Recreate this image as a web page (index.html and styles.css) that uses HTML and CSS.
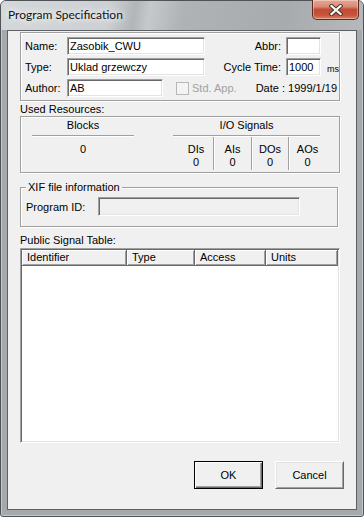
FILE: index.html
```html
<!DOCTYPE html>
<html lang="en">
<head>
    <meta charset="UTF-8">
    <title>Program Specification</title>
    <link rel="stylesheet" href="styles.css">
</head>
<body>
    <div class="window">
        <div class="titlebar">
            <span class="title">Program Specification</span>
            <div class="close-btn">
                <svg width="14" height="12" viewBox="0 0 14 12">
                    <path d="M2.5 2 L11.5 10 M11.5 2 L2.5 10" stroke="#4a3430" stroke-width="4.2" stroke-linecap="square" fill="none"/>
                    <path d="M2.5 2 L11.5 10 M11.5 2 L2.5 10" stroke="#fff" stroke-width="2.2" stroke-linecap="square" fill="none"/>
                </svg>
            </div>
        </div>

        <div class="client">
            <div class="etched info-box">
                <div class="info-row">
                    <label class="lbl" for="name">Name:</label>
                    <input type="text" id="name" class="field name-field" value="Zasobik_CWU">
                    <label class="rlbl" for="abbr">Abbr:</label>
                    <input type="text" id="abbr" class="field small-field" value="">
                    <span class="unit"></span>
                </div>
                <div class="info-row">
                    <label class="lbl" for="type">Type:</label>
                    <input type="text" id="type" class="field name-field" value="Uklad grzewczy">
                    <label class="rlbl" for="cycle">Cycle Time:</label>
                    <input type="text" id="cycle" class="field small-field" value="1000">
                    <span class="unit">ms</span>
                </div>
                <div class="info-row">
                    <label class="lbl" for="author">Author:</label>
                    <input type="text" id="author" class="field author-field" value="AB">
                    <input type="checkbox" class="check" id="std" disabled>
                    <label class="disabled-text" for="std">Std. App.</label>
                    <span class="date">Date : 1999/1/19</span>
                </div>
            </div>

            <div class="caption used-caption">Used Resources:</div>
            <div class="etched res-box">
                <div class="blocks-col">
                    <div class="res-head">Blocks</div>
                    <div class="res-val">0</div>
                </div>
                <div class="io-col">
                    <div class="res-head">I/O Signals</div>
                    <div class="io-cells">
                        <div class="io-cell w34"><span>DIs</span><span>0</span></div>
                        <div class="io-cell w38"><span>AIs</span><span>0</span></div>
                        <div class="io-cell w37"><span>DOs</span><span>0</span></div>
                        <div class="io-cell w38"><span>AOs</span><span>0</span></div>
                    </div>
                </div>
            </div>

            <fieldset class="etched xif-box">
                <legend>XIF file information</legend>
                <div class="xif-row">
                    <label class="id-lbl" for="progid">Program ID:</label>
                    <input type="text" id="progid" class="field id-field" disabled>
                </div>
            </fieldset>

            <div class="caption">Public Signal Table:</div>
            <div class="list">
                <div class="list-head">
                    <span class="col col-id">Identifier</span>
                    <span class="col col-type">Type</span>
                    <span class="col col-access">Access</span>
                    <span class="col col-units">Units</span>
                </div>
            </div>

            <div class="buttons">
                <button class="btn default">OK</button>
                <button class="btn">Cancel</button>
            </div>
        </div>
    </div>
</body>
</html>
```

FILE: styles.css
```css
* {
    margin: 0;
    padding: 0;
    box-sizing: border-box;
}

body {
    background: #fff;
    font-family: "Liberation Sans", Arial, sans-serif;
    font-size: 11px;
    color: #000;
}

/* window frame */
.window {
    width: 364px;
    height: 517px;
    display: flex;
    flex-direction: column;
    border: 1px solid #4f5357;
    border-radius: 6px 6px 3px 3px;
    background: #a6a9ac;
    box-shadow: inset 0 0 0 1px #c4c7ca;
}

.titlebar {
    height: 29px;
    display: flex;
    justify-content: space-between;
    align-items: flex-start;
    padding: 0 4px 0 7px;
    border-radius: 5px 5px 0 0;
    background: linear-gradient(100deg, #d5d8db 0%, #cdd0d3 30%, #b3b6b9 37%, #c6c9cc 41%, #b0b3b6 50%, #a8abae 78%, #b6b9bc 100%);
}

.title {
    font-family: Lato, "Open Sans", sans-serif;
    font-size: 12px;
    line-height: 28px;
    color: #111;
    text-shadow: 0 0 6px #fff, 0 0 10px #fff;
}

.close-btn {
    width: 47px;
    height: 20px;
    margin-top: -1px;
    display: flex;
    justify-content: center;
    align-items: center;
    border: 1px solid #5e2b22;
    border-top: none;
    border-radius: 0 0 5px 5px;
    background: linear-gradient(#e7a795 0%, #d98a74 35%, #c44a32 50%, #c8533a 80%, #dc8368 100%);
    box-shadow: inset 0 0 0 1px rgba(255, 255, 255, 0.35);
}

.client {
    flex: 1;
    margin: 0 6px 6px;
    padding: 1px 0 20px 12px;
    background: #f0f0f0;
    border: 1px solid #5d6064;
}

/* common 3d borders */
.etched {
    border: 1px solid #a0a0a0;
    box-shadow: inset 1px 1px #fff, 1px 1px #fff;
}

.field {
    height: 18px;
    padding: 0 2px;
    font: inherit;
    color: #000;
    background: #fff;
    border: 1px solid;
    border-color: #a0a0a0 #fff #fff #a0a0a0;
    box-shadow: inset 1px 1px #696969, inset -1px -1px #e3e3e3;
    outline: none;
}

.caption {
    line-height: 13px;
}

/* name / type / author */
.info-box {
    width: 320px;
    height: 69px;
    padding: 4px 0 3px 4px;
    display: flex;
    flex-direction: column;
    gap: 3px;
}

.info-row {
    height: 18px;
    display: flex;
    align-items: center;
}

.lbl {
    width: 42px;
}

.name-field {
    width: 138px;
}

.author-field {
    width: 96px;
}

.rlbl {
    flex: 1;
    text-align: right;
    padding-right: 5px;
}

.small-field {
    width: 35px;
}

.unit {
    width: 18px;
    padding-left: 6px;
    font-size: 9px;
    line-height: 13px;
    align-self: flex-end;
}

.check {
    appearance: none;
    width: 13px;
    height: 13px;
    margin-left: 13px;
    border: 1px solid #b8b8b8;
    background: #f4f4f4;
}

.disabled-text {
    margin-left: 3px;
    color: #a0a0a0;
}

.date {
    margin-left: auto;
    padding-right: 2px;
}

/* used resources */
.used-caption {
    margin-top: 2px;
}

.res-box {
    width: 320px;
    height: 57px;
    padding: 2px 0 0 11px;
    display: flex;
}

.res-head {
    line-height: 13px;
    padding-bottom: 3px;
    text-align: center;
    border-bottom: 1px solid #a0a0a0;
    box-shadow: 0 1px #fff;
}

.blocks-col {
    width: 102px;
}

.res-val {
    margin-top: 7px;
    line-height: 13px;
    text-align: center;
}

.io-col {
    width: 153px;
    margin-left: 39px;
}

.io-col .res-head {
    width: 147px;
}

.io-cells {
    display: flex;
    margin: 1px 0 0 6px;
    height: 33px;
}

.io-cell {
    display: flex;
    flex-direction: column;
    align-items: center;
    padding-top: 6px;
    line-height: 13px;
}

.io-cell + .io-cell {
    border-left: 1px solid #a0a0a0;
    box-shadow: inset 1px 0 #fff;
}

.w34 { width: 34px; }
.w37 { width: 37px; }
.w38 { width: 38px; }

/* XIF group */
.xif-box {
    width: 318px;
    margin-top: 8px;
    padding: 3px 0 10px 5px;
    min-inline-size: 0;
}

.xif-box legend {
    padding: 0 2px;
    line-height: 13px;
    background: #f0f0f0;
}

.xif-row {
    display: flex;
    align-items: center;
}

.id-lbl {
    width: 72px;
}

.id-field {
    width: 202px;
    height: 19px;
    background: #f0f0f0;
}

/* signal table */
.caption + .list {
    margin-top: 1px;
}

.xif-box + .caption {
    margin-top: 7px;
}

.list {
    width: 320px;
    height: 195px;
    padding: 1px;
    background: #fff;
    border: 1px solid;
    border-color: #a0a0a0 #fff #fff #a0a0a0;
    box-shadow: inset 1px 1px #696969, inset -1px -1px #e3e3e3;
}

.list-head {
    display: flex;
    height: 16px;
}

.col {
    height: 16px;
    line-height: 15px;
    padding-left: 5px;
    background: #f0f0f0;
    border-right: 1px solid #696969;
    border-bottom: 1px solid #696969;
    box-shadow: inset 1px 1px #fff, inset -1px -1px #a0a0a0;
}

.col-id { width: 105px; }
.col-type { width: 68px; }
.col-access { width: 71px; }
.col-units { width: 72px; }

/* buttons */
.buttons {
    display: flex;
    justify-content: flex-end;
    gap: 12px;
    margin-top: 18px;
    padding-right: 12px;
}

.btn {
    width: 69px;
    height: 28px;
    font: inherit;
    color: #000;
    background: #f0f0f0;
    border: 1px solid;
    border-color: #fff #696969 #696969 #fff;
    box-shadow: inset 1px 1px #e3e3e3, inset -1px -1px #a0a0a0;
}

.btn.default {
    border: 1px solid #000;
    box-shadow: inset 1px 1px #fff, inset -1px -1px #696969, inset -2px -2px #a0a0a0;
}
```
